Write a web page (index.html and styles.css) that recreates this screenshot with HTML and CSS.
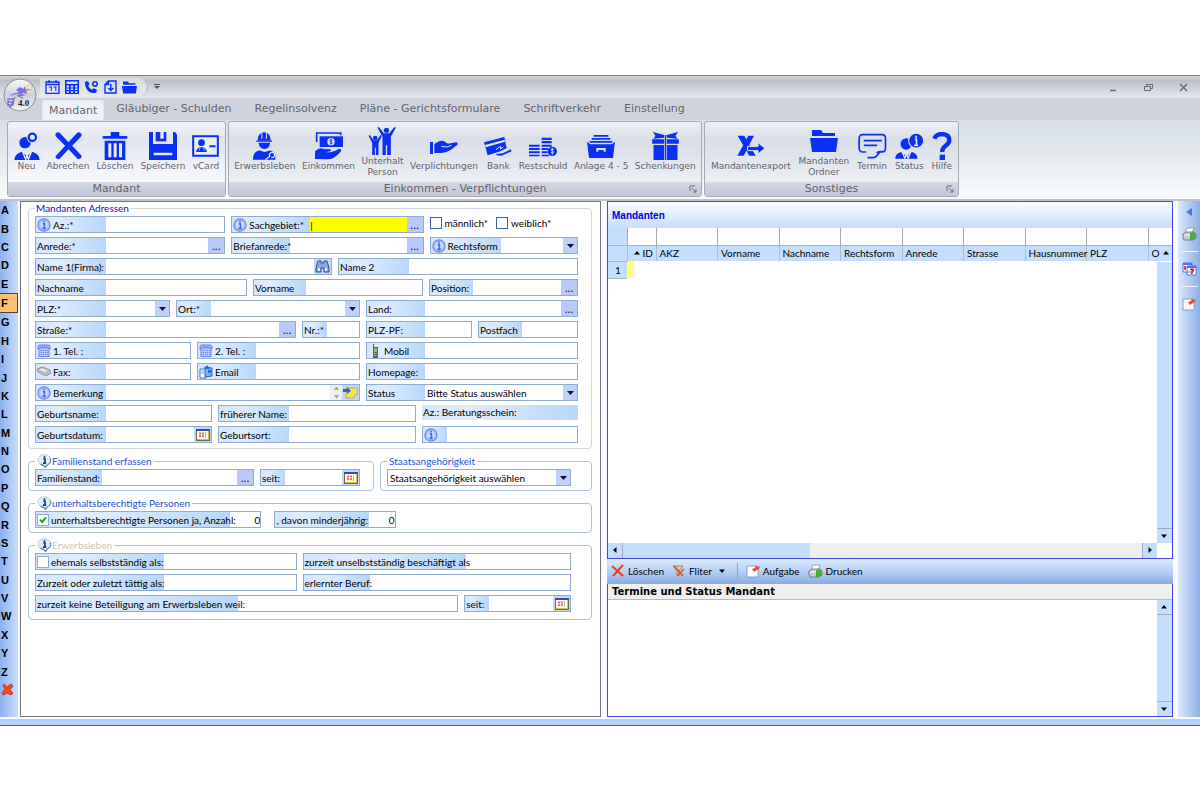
FILE: index.html
```
<!DOCTYPE html>
<html lang="de">
<head>
    <meta charset="UTF-8">
    <meta name="viewport" content="width=device-width, initial-scale=1.0">
    <title>Mandant</title>
    <link rel="stylesheet" href="styles.css">
</head>
<body>

<!-- shared icons -->
<svg class="sprite">
    <symbol id="info" viewBox="0 0 14 14">
        <circle cx="7" cy="7" r="6" fill="#cfdcff" stroke="#6f8cf2" stroke-width="1.4"/>
        <circle cx="7" cy="7" r="4.4" fill="none" stroke="#8fa6f6" stroke-width=".7"/>
        <path d="M7 2.8v1.6M5.6 5.8H7.4V10M5.4 10.4h3.4" stroke="#4668e6" stroke-width="1.6" fill="none"/>
    </symbol>
    <symbol id="bubble" viewBox="0 0 15 14">
        <path d="M7.5 .7a6 5.4 0 0 1 2.6 10.3L8.6 13.4 6.6 11.5A6 5.4 0 0 1 7.5 .7z" fill="#e3eefb" stroke="#a9bfdc" stroke-width=".8"/>
        <path d="M13.3 4.5a6 5.4 0 0 1-3.2 6.5L8.6 13.4 6.6 11.5a6 5.4 0 0 1-3-1.8" fill="none" stroke="#5c86bd" stroke-width="1.3"/>
        <path d="M7.5 2.2v1.7M6.2 5H8v4M6 9.2h3.2" stroke="#143a86" stroke-width="1.7" fill="none"/>
    </symbol>
    <symbol id="calendar" viewBox="0 0 14 12">
        <rect width="14" height="12" fill="#6f6a3a"/>
        <rect width="14" height="2" fill="#2c4fb0"/>
        <rect x="1" y="2" width="11" height="8" fill="#fffbe8"/>
        <path d="M3 3.5h5v4.500H3z" fill="#e06a7a"/>
        <path d="M5.500 3.500V8M3 5.700h5" stroke="#fff" stroke-width=".8"/>
        <path d="M9.500 3v6" stroke="#9fa890" stroke-width=".8"/>
        <path d="M12.500 2v8.500H1" stroke="#e0bf3c" fill="none"/>
    </symbol>
    <symbol id="phone" viewBox="0 0 14 13">
        <path d="M1 5V2.5Q1 1 3 1h8q2 0 2 1.5V5h-3V3H4v2z" fill="#a9bbff" stroke="#5a76ea" stroke-width=".9"/>
        <rect x="2" y="4" width="10" height="8.5" fill="#c9d5ff" stroke="#5a76ea" stroke-width=".9"/>
        <path d="M3.5 6.3h7.5M3.5 8.3h7.5M3.5 10.3h7.5" stroke="#4668e6" stroke-dasharray="1.3 .8"/>
    </symbol>
    <symbol id="folder" viewBox="0 0 28 24">
        <path d="M2 1h9l2 3h12v3H2z"/>
        <path d="M0 9h28l-2 14H2z"/>
    </symbol>
    <symbol id="task" viewBox="0 0 14 14">
        <path d="M1 2h8l3 3v8H1z" fill="#f8fbff" stroke="#7b9ad0" stroke-width=".9"/>
        <path d="M6 5l3-1 1-3 2 2 2-1-1 3-2 1-3 2z" fill="#f0483c"/>
    </symbol>
    <symbol id="printer" viewBox="0 0 15 14">
        <path d="M5 1h7l-2 5H3z" fill="#fff" stroke="#7d8a9c" stroke-width=".7"/>
        <path d="M1 7l3-2h8l2 2v4l-3 2H2l-1-2z" fill="#c3cad3" stroke="#667" stroke-width=".8"/>
        <path d="M8 6l5-1 1 6-3 2H8z" fill="#49ac3c"/>
        <path d="M2 8h6" stroke="#fff"/>
    </symbol>
    <symbol id="up" viewBox="0 0 14 14"><path d="M7 5l3 3.5H4z"/></symbol>
    <symbol id="down" viewBox="0 0 14 14"><path d="M7 9L4 5.5h6z"/></symbol>
    <symbol id="left" viewBox="0 0 14 14"><path d="M5 7l3.5-3v6z"/></symbol>
    <symbol id="right" viewBox="0 0 14 14"><path d="M9 7L5.5 4v6z"/></symbol>
    <symbol id="launcher" viewBox="0 0 8 8">
        <path d="M1 6V1h5M3 3l4 4M7 4v3H4" fill="none" stroke="#6b6d80"/>
    </symbol>
</svg>

<div class="app">
    <header class="titlebar">
        <button class="orb" aria-label="Menü">
            <svg width="34" height="34" viewBox="0 0 34 34">
                <defs>
                    <linearGradient id="orbFill" x1="0" y1="0" x2="0" y2="1">
                        <stop offset="0" stop-color="#fbfbfd"/><stop offset=".5" stop-color="#cfd0d8"/><stop offset="1" stop-color="#f4f4f8"/>
                    </linearGradient>
                </defs>
                <circle cx="17" cy="17" r="16" fill="url(#orbFill)" stroke="#8e9098"/>
                <path d="M17 9l4 2 0-3 2 3 4 0-4 3 1 2-4-1-5 2 1-3-3-2z" fill="#7a70e4"/>
                <path d="M8 17l7-2 5 2-5 1 5 2M5 21h6l-1 6H5zM12 19l-5 11M5 24h5" fill="none" stroke="#7a6ae0" stroke-width="1.3"/>
                <circle cx="26" cy="10" r="3" fill="none" stroke="#f0c490"/>
                <text x="15" y="28" class="orb-text">4.0</text>
            </svg>
        </button>
        <nav class="quick">
            <button aria-label="Kalender"><svg width="15" height="14" viewBox="0 0 15 14"><path d="M1 2h13v11.500H1zM1 4.500h13M4 0v3M11 0v3" fill="none" stroke="#0a2ff5" stroke-width="1.300"/><path d="M4 7h3M6.300 7v4M8.500 7h3M10.800 7v4" stroke="#0a2ff5" fill="none"/></svg></button>
            <button aria-label="Rechner"><svg width="14" height="14" viewBox="0 0 14 14"><path fill="#0a2ff5" fill-rule="evenodd" d="M0 0h14v14H0zM1.500 1.500v2.500h11V1.500zM1.500 5.500v2h2.500v-2zM5.700 5.500v2h2.500v-2zM10 5.500v2h2.500v-2zM1.500 8.500v1.500h2.500V8.500zM5.700 8.500v1.500h2.500V8.500zM10 8.500v1.500h2.500V8.500zM1.500 11.200v1.500h2.500v-1.500zM5.700 11.200v1.500h2.500v-1.500zM10 11.200v1.500h2.500v-1.500z"/></svg></button>
            <button aria-label="Telefon"><svg width="15" height="14" viewBox="0 0 15 14"><path d="M1 2l3-1 1.500 3.500-1.500 1.300q1.300 3 4 4L9.500 8.300l3.500 1.500-1 3Q6 14 3 9.500 .5 6 1 2z" fill="#0a2ff5"/><circle cx="11" cy="4" r="2.200" fill="none" stroke="#0a2ff5" stroke-width="1.600"/></svg></button>
            <button aria-label="Import"><svg width="13" height="14" viewBox="0 0 13 14"><path d="M4.500 1H12v12H1V4.500zM4.500 1v3.500H1M6.800 4v6.500M4.300 8l2.500 2.500L9.300 8" fill="none" stroke="#0a2ff5" stroke-width="1.400"/></svg></button>
            <button aria-label="Ordner"><svg width="15" height="13" fill="#0a2ff5"><use href="#folder"/></svg></button>
        </nav>
        <button class="more" aria-label="Anpassen"><svg width="6" height="6" viewBox="0 0 6 6"><path d="M0 .5h6" stroke="#555"/><path d="M0 2h6L3 5z" fill="#555"/></svg></button>
        <div class="window-buttons">
            <button aria-label="Minimieren"><svg width="9" height="9" viewBox="0 0 9 9"><path d="M1 7.500h6" stroke="#666a74" stroke-width="1.500"/></svg></button>
            <button aria-label="Wiederherstellen"><svg width="9" height="9" viewBox="0 0 9 9"><path d="M.5 3.500h6v4h-6zM2.500 3V1.500h6v4H7" fill="none" stroke="#666a74"/></svg></button>
            <button aria-label="Schließen"><svg width="9" height="9" viewBox="0 0 9 9"><path d="M1 1l7 7M8 1L1 8" stroke="#666a74" stroke-width="1.500"/></svg></button>
        </div>
    </header>

    <nav class="tabs">
        <a href="#" class="active">Mandant</a>
        <a href="#">Gläubiger - Schulden</a>
        <a href="#">Regelinsolvenz</a>
        <a href="#">Pläne - Gerichtsformulare</a>
        <a href="#">Schriftverkehr</a>
        <a href="#">Einstellung</a>
    </nav>

    <div class="ribbon">
        <section class="group group-client">
            <div class="tools">
                <button>
                    <svg width="26" height="28" viewBox="0 0 76 84"><circle cx="32" cy="32" r="17"/><circle cx="54" cy="16" r="17" fill="#eceef6"/><circle cx="54" cy="16" r="11" fill="none" stroke="#0a2ff5" stroke-width="7"/><path d="M0 84q0-18 22-25l16 13 16-13q22 7 22 25z"/><path d="M25 59l9 23 4-13 4 13 9-23" fill="none" stroke="#eceef6" stroke-width="4"/></svg>
                    Neu
                </button>
                <button>
                    <svg width="29" height="28" viewBox="0 0 84 84"><path d="M6 2q6-4 11 2l25 27L67 4q5-6 12 0 5 4 0 10L53 41l29 31q-2 10-12 9L42 52 15 81q-12 1-12-8l29-32L4 13Q0 7 6 2z"/></svg>
                    Abrechen
                </button>
                <button>
                    <svg width="26" height="28" viewBox="0 0 74 84"><path d="M0 12h24V0h26v12h24v8H0z"/><path fill-rule="evenodd" d="M6 26h62v58H6zM17 34v42h9V34zM33 34v42h9V34zM49 34v42h9V34z"/></svg>
                    Löschen
                </button>
                <button>
                    <svg width="28" height="28" viewBox="0 0 84 84"><path fill-rule="evenodd" d="M0 0h12v36h60V0h6l6 8v76H0zM14 62v8h56v-8z"/><path d="M20 0h32v28H20z"/><path d="M34 0h10v20H34z" fill="#eceef6"/></svg>
                    Speichern
                </button>
                <button>
                    <svg width="27" height="28" viewBox="0 0 80 84"><path d="M3 13h74v58H3z" fill="#eceef6" stroke="#0a2ff5" stroke-width="6"/><circle cx="28" cy="32" r="10"/><path d="M12 60q1-14 16-15 15 1 16 15zM52 40h18v6H52z"/><path d="M24 46l-3 10M33 46l4 10" stroke="#eceef6" stroke-width="2"/></svg>
                    vCard
                </button>
            </div>
            <footer>Mandant</footer>
        </section>

        <section class="group group-income">
            <div class="tools">
                <button>
                    <svg width="23" height="28" viewBox="0 0 70 84"><path d="M14 26q0-24 20-26 20 2 20 26z"/><path d="M27 3v17M41 3v17" stroke="#e4e7f1" stroke-width="3"/><path d="M10 25h48v4H10zM17 32h35q-1 18-17 19-17-1-18-19zM0 84q-1-26 22-28 13 9 28 0 14 3 18 12v16z"/><path d="M38 84l13-11a8 8 0 1 1 5 4" fill="none" stroke="#e4e7f1" stroke-width="4"/></svg>
                    Erwerbsleben
                </button>
                <button>
                    <svg width="28" height="28" viewBox="0 0 84 84"><path d="M5 30V3h72v7M5 3v27" fill="none" stroke="#0a2ff5" stroke-width="5"/><path d="M14 13h70v32H14z"/><circle cx="48" cy="29" r="11" fill="#e4e7f1"/><path d="M52 24q-7-3-8 1 0 3 5 4 4 2 2 5-3 2-7-1M48 20v18" fill="none" stroke="#0a2ff5" stroke-width="2.500"/><path d="M0 58q14-13 26-7l20 1q4 3 0 6l-15 3q22 1 40-10 12-1 6 8Q56 83 36 82l-36-1z"/></svg>
                    Einkommen
                </button>
                <button>
                    <svg width="29" height="28" viewBox="0 0 84 84"><circle cx="20" cy="33" r="7"/><path d="M0 26l4-2 11 16h10l11-16 4 2-10 21v37h-8V62h-3v22h-8V47z"/><circle cx="54" cy="10" r="8"/><path d="M27 2l4-2 15 19h16L78 0l4 2-15 27v55H56V55h-4v29H42V29z"/></svg>
                    <span>Unterhalt<br>Person</span>
                </button>
                <button>
                    <svg width="28" height="28" viewBox="0 0 84 84"><path d="M0 30h9v36H0z"/><path d="M13 36l10-6q13-7 22-1l9 6 24-4q8 2 4 7l-19 15q-12 8-28 10l-22 0z"/><path d="M34 43l16 2 14-5" fill="none" stroke="#e4e7f1" stroke-width="3"/></svg>
                    Verplichtungen
                </button>
                <button>
                    <svg width="28" height="28" viewBox="0 0 84 84"><path d="M0 31L61 15l7 34-23 10-34 11z"/><path d="M3 39l59-16 1 6L5 46z" fill="#e4e7f1"/><path d="M36 53l13-10 1 8 8-6" fill="none" stroke="#e4e7f1" stroke-width="3"/><path d="M36 66l20-2 24-12 3 6-31 13-14-1z"/></svg>
                    Bank
                </button>
                <button>
                    <svg width="28" height="28" viewBox="0 0 84 84"><path d="M38 17h30v7H38zM38 27h30v7H38zM0 38h32v6H0zM0 48h32v6H0zM0 58h32v6H0zM0 68h32v5H0zM38 38h30v6H38zM38 48h20v6H38zM38 58h18v6H38zM38 68h22v5H38z"/><circle cx="70" cy="58" r="14"/><path d="M74 52q-7-3-8 1 0 3 5 4 4 2 2 5-3 2-7-1M70 48v20" fill="none" stroke="#e4e7f1" stroke-width="2.500"/></svg>
                    Restschuld
                </button>
                <button>
                    <svg width="28" height="28" viewBox="0 0 84 84"><path d="M20 9h44v5H20zM14 18h56v5H14zM8 27h68v5H8zM0 29l10 8h64l10-8-6 49H6z"/><path d="M28 48h28v11h-6v-5H34v5h-6z" fill="#e4e7f1"/></svg>
                    Anlage 4 - 5
                </button>
                <button>
                    <svg width="27" height="28" viewBox="0 0 80 84"><path d="M2 0l34 9v8L4 20l6-9zM78 0L44 9v8l32 3-6-9zM0 22h36v13H0zM44 22h36v13H44zM4 39h32v45H4zM44 39h32v45H44z"/><path d="M38 9h4v75h-4z"/></svg>
                    Schenkungen
                </button>
            </div>
            <footer>Einkommen - Verpflichtungen<svg class="launcher" width="8" height="8"><use href="#launcher"/></svg></footer>
        </section>

        <section class="group group-misc">
            <div class="tools">
                <button>
                    <svg width="28" height="28" viewBox="0 0 84 84"><path d="M2 11h20l34 60H37zM34 11h17L20 71H1z"/><path d="M32 43h31V32l21 17-21 17V56H32z" stroke="#e4e7f1" stroke-width="3"/></svg>
                    Mandantenexport
                </button>
                <button>
                    <svg width="28" height="28"><use href="#folder"/></svg>
                    <span>Mandanten<br>Ordner</span>
                </button>
                <button>
                    <svg width="29" height="28" viewBox="0 0 86 84"><path d="M14 8h58q10 0 10 12v28q0 12-10 12h-6L55 72q-3 5-12 5H28M24 60H14Q3 60 3 48V20Q3 8 14 8M76 59q-20-2-20 5" fill="none" stroke="#0a2ff5" stroke-width="5"/><path d="M17 26h54M17 40h40" stroke="#0a2ff5" stroke-width="5"/></svg>
                    Termin
                </button>
                <button>
                    <svg width="29" height="28" viewBox="0 0 86 84"><circle cx="33" cy="36" r="17"/><circle cx="63" cy="26" r="24" fill="#e4e7f1"/><circle cx="63" cy="26" r="21"/><path d="M63 11v7M59 22h5v17M57 40h12" stroke="#e4e7f1" stroke-width="5" fill="none"/><path d="M0 80q1-16 18-20l16 12 16-12q16 4 17 20z"/><path d="M21 59l8 20 5-12 5 12 8-20" fill="none" stroke="#e4e7f1" stroke-width="4"/></svg>
                    Status
                </button>
                <button>
                    <svg width="20" height="28" viewBox="0 0 60 84"><path d="M7 20Q12 6 30 6q22 1 22 18 0 10-12 18-10 7-9 18" fill="none" stroke="#0a2ff5" stroke-width="13"/><path d="M23 68h16v16H23z"/></svg>
                    Hilfe
                </button>
            </div>
            <footer>Sonstiges<svg class="launcher" width="8" height="8"><use href="#launcher"/></svg></footer>
        </section>
    </div>

    <main class="workspace">
        <nav class="letters">
            <a href="#">A</a><a href="#">B</a><a href="#">C</a><a href="#">D</a><a href="#">E</a><a href="#" class="active">F</a><a href="#">G</a><a href="#">H</a><a href="#">I</a><a href="#">J</a><a href="#">K</a><a href="#">L</a><a href="#">M</a><a href="#">N</a><a href="#">O</a><a href="#">P</a><a href="#">Q</a><a href="#">R</a><a href="#">S</a><a href="#">T</a><a href="#">U</a><a href="#">V</a><a href="#">W</a><a href="#">X</a><a href="#">Y</a><a href="#">Z</a>
            <a href="#" aria-label="Filter löschen"><svg width="13" height="13" viewBox="0 0 13 13"><path d="M3 1l3 3 4-3 2 2-3 4 3 3-2 2-4-2-4 2-1-2 3-4-2-3z" fill="#f2491f" stroke="#c42c10" stroke-width=".8"/></svg></a>
        </nav>

        <form class="form-panel">
            <fieldset class="address">
                <legend>Mandanten Adressen</legend>
                <div class="row r-az">
                    <div class="field"><label class="w70" for="az"><svg width="14" height="14"><use href="#info"/></svg>Az.:*</label><input id="az"></div>
                    <div class="field"><label class="w78" for="sachgebiet"><svg width="14" height="14"><use href="#info"/></svg>Sachgebiet:*</label><input id="sachgebiet" class="focused" value="|"><button type="button" class="dots">...</button></div>
                    <div class="checks">
                        <label><input type="checkbox">männlich*</label>
                        <label><input type="checkbox">weiblich*</label>
                    </div>
                </div>
                <div class="row r-az">
                    <div class="field"><label class="w70" for="anrede">Anrede:*</label><input id="anrede"><button type="button" class="dots">...</button></div>
                    <div class="field"><label class="w58" for="brief">Briefanrede:*</label><input id="brief"><button type="button" class="dots">...</button></div>
                    <div class="field"><label class="w70" for="rechtsform"><svg width="14" height="14"><use href="#info"/></svg>Rechtsform</label><select id="rechtsform"><option></option></select></div>
                </div>
                <div class="row r-name">
                    <div class="field"><label class="w70" for="name1">Name 1(Firma):</label><input id="name1"><button type="button" class="icon-button" aria-label="Suchen"><svg width="15" height="13" viewBox="0 0 15 13"><path d="M3 1h3v2h3V1h3l2 7v4H9V8H6v4H1V8z" fill="#8aa6da" stroke="#2f4f92"/><path d="M3 8h2v3H3zM10 8h2v3h-2z" fill="#e8f0ff"/></svg></button></div>
                    <div class="field"><label class="w70" for="name2">Name 2</label><input id="name2"></div>
                </div>
                <div class="row r-person">
                    <div class="field"><label class="w70" for="nachname">Nachname</label><input id="nachname"></div>
                    <div class="field"><label class="w52" for="vorname">Vorname</label><input id="vorname"></div>
                    <div class="field"><label class="w42" for="position">Position:</label><input id="position"><button type="button" class="dots">...</button></div>
                </div>
                <div class="row r-place">
                    <div class="field"><label class="w70" for="plz">PLZ:*</label><select id="plz"><option></option></select></div>
                    <div class="field"><label class="w34" for="ort">Ort:*</label><select id="ort"><option></option></select></div>
                    <div class="field"><label class="w58" for="land">Land:</label><input id="land"><button type="button" class="dots">...</button></div>
                </div>
                <div class="row r-street">
                    <div class="field"><label class="w70" for="strasse">Straße:*</label><input id="strasse"><button type="button" class="dots">...</button></div>
                    <div class="field"><label class="w24" for="nr">Nr.:*</label><input id="nr"></div>
                    <div class="field"><label class="w58" for="plzpf">PLZ-PF:</label><input id="plzpf"></div>
                    <div class="field"><label class="w42" for="postfach">Postfach</label><input id="postfach"></div>
                </div>
                <div class="row r-phone">
                    <div class="field"><label class="w70" for="tel1"><svg width="14" height="13"><use href="#phone"/></svg>1. Tel. :</label><input id="tel1"></div>
                    <div class="field"><label class="w58" for="tel2"><svg width="14" height="13"><use href="#phone"/></svg>2. Tel. :</label><input id="tel2"></div>
                    <div class="field"><label class="w58" for="mobil"><svg width="14" height="14" viewBox="0 0 14 14"><path d="M5 0h1v3h4v11H5z" fill="#59635a"/><path d="M6 4h3v4H6z" fill="#7fc46a"/><path d="M6 9.500h3M6 11.500h3" stroke="#c8ccc8" stroke-dasharray="1 .5"/></svg>Mobil</label><input id="mobil"></div>
                </div>
                <div class="row r-phone">
                    <div class="field"><label class="w70" for="fax"><svg width="14" height="13" viewBox="0 0 14 13"><path d="M0 4l5-2 8 3 1 3-5 3-8-4z" fill="#b9bdc4" stroke="#7d828a" stroke-width=".8"/><path d="M2 4.500l3-1 6 2-3 1.500z" fill="#e9ebee"/></svg>Fax:</label><input id="fax"></div>
                    <div class="field"><label class="w58" for="email"><svg width="14" height="14" viewBox="0 0 14 14"><path d="M1 4h6v9H1z" fill="#fff" stroke="#4777c4"/><path d="M6 2l7 1v8l-7 1z" fill="#7cb4f0" stroke="#2c62b8"/><path d="M8 0l3 4H6zM9 5h3v3H9z" fill="#2468c8"/><path d="M2 6h3M2 8h3" stroke="#7c9cd0"/></svg>Email</label><input id="email"></div>
                    <div class="field"><label class="w58" for="homepage">Homepage:</label><input id="homepage"></div>
                </div>
                <div class="row r-note">
                    <div class="field"><label class="w70" for="bemerkung"><svg width="14" height="14"><use href="#info"/></svg>Bemerkung</label><input id="bemerkung"><span class="spin"><svg width="9" height="7" viewBox="2 4 10 6"><use href="#up" width="14" height="14"/></svg><svg width="9" height="7" viewBox="2 4 10 6"><use href="#down" width="14" height="14"/></svg></span><button type="button" class="icon-button" aria-label="Notiz"><svg width="15" height="13" viewBox="0 0 15 13"><path d="M3 2h12l-1 7-3 3H3z" fill="#f6e25a" stroke="#a89638" stroke-width=".7"/><path d="M14 9h-3v3" fill="#fff6ae" stroke="#a89638" stroke-width=".7"/><path d="M0 3h4V1l4 4-4 3V6H0z" fill="#2c64c4"/></svg></button></div>
                    <div class="field"><label class="w58" for="status">Status</label><select id="status"><option>Bitte Status auswählen</option></select></div>
                </div>
                <div class="row r-birth">
                    <div class="field"><label class="w70" for="gebname">Geburtsname:</label><input id="gebname"></div>
                    <div class="field"><label class="w70" for="frueher">früherer Name:</label><input id="frueher"></div>
                    <label class="caption" for="beratung">Az.: Beratungsschein:</label>
                </div>
                <div class="row r-birth">
                    <div class="field"><label class="w70" for="gebdatum">Geburtsdatum:</label><input id="gebdatum"><button type="button" class="icon-button" aria-label="Datum"><svg width="14" height="12"><use href="#calendar"/></svg></button></div>
                    <div class="field"><label class="w70" for="gebort">Geburtsort:</label><input id="gebort"></div>
                    <div class="field"><label class="w24" for="beratung"><svg width="14" height="14"><use href="#info"/></svg></label><input id="beratung"></div>
                </div>
            </fieldset>

            <div class="pair">
                <fieldset>
                    <legend><svg width="15" height="14"><use href="#bubble"/></svg>Familienstand erfassen</legend>
                    <div class="row r-family">
                        <div class="field"><label class="w66" for="familie">Familienstand:</label><input id="familie"><button type="button" class="dots">...</button></div>
                        <div class="field"><label class="w24" for="seit1">seit:</label><input id="seit1"><button type="button" class="icon-button" aria-label="Datum"><svg width="14" height="12"><use href="#calendar"/></svg></button></div>
                    </div>
                </fieldset>
                <fieldset>
                    <legend>Staatsangehörigkeit</legend>
                    <div class="row r-state">
                        <div class="field"><select aria-label="Staatsangehörigkeit"><option>Staatsangehörigkeit auswählen</option></select></div>
                    </div>
                </fieldset>
            </div>

            <fieldset>
                <legend><svg width="15" height="14"><use href="#bubble"/></svg>unterhaltsberechtigte Personen</legend>
                <div class="row r-support">
                    <div class="field"><label class="w194"><input type="checkbox" checked>unterhaltsberechtigte Personen ja, Anzahl:</label><input class="number" aria-label="Anzahl" value="0"></div>
                    <div class="field"><label class="w94" for="minder">, davon minderjährig:</label><input id="minder" class="number" value="0"></div>
                </div>
            </fieldset>

            <fieldset class="work">
                <legend><svg width="15" height="14"><use href="#bubble"/></svg>Erwerbsleben</legend>
                <div class="row r-work">
                    <div class="field"><label class="w128"><input type="checkbox">ehemals selbstständig als:</label><input aria-label="ehemals selbstständig als"></div>
                    <div class="field"><label class="w162" for="unselbst">zurzeit unselbstständig beschäftigt als</label><input id="unselbst"></div>
                </div>
                <div class="row r-work">
                    <div class="field"><label class="w128" for="zurzeit">Zurzeit oder zuletzt tättig als:</label><input id="zurzeit"></div>
                    <div class="field"><label class="w66" for="beruf">erlernter Beruf:</label><input id="beruf"></div>
                </div>
                <div class="row r-reason">
                    <div class="field"><label class="w202" for="grund">zurzeit keine Beteiligung am Erwerbsleben weil:</label><input id="grund"></div>
                    <div class="field"><label class="w24" for="seit2">seit:</label><input id="seit2"><button type="button" class="icon-button" aria-label="Datum"><svg width="14" height="12"><use href="#calendar"/></svg></button></div>
                </div>
            </fieldset>
        </form>

        <div class="side">
            <section class="list">
                <h2>Mandanten</h2>
                <div class="list-body">
                    <table>
                        <colgroup><col class="c-num"><col class="c-id"><col><col><col><col><col><col><col><col><col class="c-last"></colgroup>
                        <thead>
                            <tr class="filter"><td></td><td></td><td></td><td></td><td></td><td></td><td></td><td></td><td></td><td></td><td></td></tr>
                            <tr><th></th><th class="id"><svg width="8" height="8" viewBox="3 3 8 8"><use href="#up" width="14" height="14"/></svg>ID</th><th>AKZ</th><th>Vorname</th><th>Nachname</th><th>Rechtsform</th><th>Anrede</th><th>Strasse</th><th>Hausnummer</th><th>PLZ</th><th>O<svg width="8" height="8" viewBox="3 3 8 8"><use href="#up" width="14" height="14"/></svg></th></tr>
                        </thead>
                        <tbody>
                            <tr><th>1</th><td class="current"></td><td colspan="9"></td></tr>
                        </tbody>
                    </table>
                    <div class="vscroll">
                        <button aria-label="Nach unten"><svg width="14" height="14"><use href="#down"/></svg></button>
                    </div>
                </div>
                <div class="hscroll">
                    <button aria-label="Nach links"><svg width="14" height="14"><use href="#left"/></svg></button>
                    <div class="thumb"></div>
                    <div class="track"></div>
                    <button aria-label="Nach rechts"><svg width="14" height="14"><use href="#right"/></svg></button>
                </div>
            </section>

            <div class="toolbar">
                <button><svg width="14" height="14" viewBox="0 0 14 14"><path d="M1 2l11 10M12 1L2 12" stroke="#e8401c" stroke-width="2"/></svg>Löschen</button>
                <button><svg width="14" height="14" viewBox="0 0 14 14"><path d="M1 2h10L7 7v5L5 11V7z" fill="#d9c7b4" stroke="#94715a" stroke-width=".8"/><path d="M2 2l9 10M12 5l-7 7" stroke="#e8501c" stroke-width="1.600"/></svg>Fliter<svg width="14" height="14"><use href="#down"/></svg></button>
                <i></i>
                <button><svg width="14" height="14"><use href="#task"/></svg>Aufgabe</button>
                <button><svg width="15" height="14"><use href="#printer"/></svg>Drucken</button>
            </div>

            <section class="dates">
                <h3>Termine und Status Mandant</h3>
                <div class="dates-body">
                    <div class="vscroll">
                        <button aria-label="Nach oben"><svg width="14" height="14"><use href="#up"/></svg></button>
                        <button aria-label="Nach unten"><svg width="14" height="14"><use href="#down"/></svg></button>
                    </div>
                </div>
            </section>
        </div>

        <aside class="dock">
            <button aria-label="Einblenden"><svg width="8" height="10" viewBox="0 0 8 10"><path d="M7 1v8L1 5z" fill="#3d7be0"/></svg></button>
            <button aria-label="Drucken"><svg width="15" height="14"><use href="#printer"/></svg></button>
            <i></i>
            <button aria-label="Kalender"><svg width="15" height="14" viewBox="0 0 15 14"><path d="M1 1h9v9H1zM5 4h9v9H5z" fill="#fff" stroke="#4a78d8"/><path d="M1 1h9v2H1zM5 4h9v2H5z" fill="#4a78d8"/><path d="M3 4v4M8 7.500h3.500L9.500 12" stroke="#e01818" stroke-width="1.600" fill="none"/></svg></button>
            <i></i>
            <button aria-label="Aufgabe"><svg width="14" height="14"><use href="#task"/></svg></button>
        </aside>
    </main>
    <div class="statusbar"></div>
</div>

</body>
</html>
```
FILE: styles.css
```
* {
    box-sizing: border-box;
}
body {
    margin: 0;
    min-height: 100vh;
    padding: 75px 0 74px;
    display: flex;
    flex-direction: column;
    background: white;
    font-family: Lato, "Liberation Sans", Arial, sans-serif;
    font-size: 10px;
    color: #000;
}
button, input, select {
    font: inherit;
    color: inherit;
    margin: 0;
    padding: 0;
    border: none;
    border-radius: 0;
    background: none;
}
svg {
    display: block;
    flex: none;
}
a {
    color: inherit;
    text-decoration: none;
}
.sprite {
    position: absolute;
    width: 0;
    height: 0;
}
.app {
    flex: 1;
    display: flex;
    flex-direction: column;
    border-top: 1px solid #77787e;
    border-bottom: 1px solid #4d5f78;
    background: #f4f7fc;
}

/* title bar */
.titlebar {
    position: relative;
    display: flex;
    align-items: center;
    height: 22px;
    padding-left: 40px;
    background: linear-gradient(#d3d6dc, #b9bfc8 20%, #d0d6dd 60%, #e3e8ed);
}
.orb {
    position: absolute;
    left: 3px;
    top: 2px;
    z-index: 2;
}
.orb-text {
    font: bold 9px "Liberation Serif", serif;
    fill: #222;
}
.quick {
    display: flex;
    align-items: center;
    gap: 5px;
    height: 19px;
    padding: 0 10px 0 5px;
    border-right: 1px solid #b4bac4;
    border-radius: 0 10px 10px 0;
    background: linear-gradient(#d5d9e0, #e6eaef);
}
.more {
    margin-left: 6px;
}
.window-buttons {
    display: flex;
    gap: 26px;
    margin-left: auto;
    padding-right: 12px;
}

/* tabs */
.tabs {
    display: flex;
    height: 22px;
    padding-left: 42px;
    background: #d0d3dd;
    font: 11px/22px "DejaVu Sans", Verdana, sans-serif;
    color: #62646e;
}
.tabs a {
    padding: 0 9px;
    margin-right: 5px;
}
.tabs .active {
    padding: 0 6px;
    margin: 2px 3px 0 0;
    line-height: 19px;
    border: 1px solid #e2e6ee;
    border-bottom: none;
    border-radius: 3px 3px 0 0;
    background: #eef1f7;
}

/* ribbon */
.ribbon {
    display: flex;
    gap: 2px;
    padding: 1px 7px 2px;
    border-bottom: 2px solid #bfc2c6;
    background: linear-gradient(#d8e0e8, #dfe5ec 30%, #f9fcfc);
    font-family: "DejaVu Sans", Verdana, sans-serif;
    color: #62646e;
}
.group {
    display: flex;
    flex-direction: column;
    border: 1px solid #a7aab3;
    border-radius: 3px;
    background: linear-gradient(#eef0f5, #d9dde7 24%, #dfe3eb 45%, #f3f5f8);
}
.group-client {
    width: 219px;
    background: linear-gradient(#f3f4f9, #e1e3f1 24%, #eceef6 50%, #fff);
}
.group-income {
    width: 474px;
}
.group-misc {
    width: 255px;
}
.tools {
    display: flex;
    align-items: center;
    justify-content: space-around;
    height: 60px;
    padding: 0 2px;
}
.tools button {
    display: flex;
    flex-direction: column;
    align-items: center;
    gap: 1px;
    font-size: 9px;
    line-height: 11px;
    white-space: nowrap;
}
.tools svg {
    fill: #0a2ff5;
}
.group footer {
    position: relative;
    height: 14px;
    font-size: 11px;
    line-height: 14px;
    text-align: center;
    border-radius: 0 0 2px 2px;
    background: linear-gradient(#d6d9e4, #c2c5d6);
}
.launcher {
    position: absolute;
    right: 4px;
    top: 3px;
}

/* workspace */
.workspace {
    flex: 1;
    display: grid;
    grid-template-columns: 18px minmax(0, 583fr) minmax(0, 572fr) 27px;
    background: #f9f9ff;
    padding-bottom: 2px;
}
.letters {
    display: flex;
    flex-direction: column;
    padding-bottom: 18px;
    background: linear-gradient(to right, #8bb1ee, #cadefa);
    font: bold 11px "Liberation Sans", Arial, sans-serif;
}
.letters a {
    flex: 1;
    display: flex;
    align-items: center;
    padding-left: 1px;
}
.letters .active {
    border: 1px solid #4b4640;
    border-left: none;
    background: #fdc071;
}
.form-panel {
    margin-left: 2px;
    padding: 0 8px 0 7px;
    border: 1px solid #74757f;
    background: white;
}
fieldset {
    min-width: 0;
    margin: 0 0 6px;
    padding: 2px 6px 4px;
    border: 1px solid #a8c0da;
    border-radius: 4px;
}
legend {
    display: flex;
    align-items: center;
    height: 12px;
    padding: 0 2px;
    line-height: 12px;
    color: #1c50dc;
}
.address {
    padding: 2px 13px 5px 6px;
    border-color: #d3d6dc;
}
.address legend {
    padding: 0 1px;
    color: #1010b4;
}
.work {
    padding-bottom: 7px;
}
.work legend {
    color: #c6c3b4;
}
.pair {
    display: grid;
    grid-template-columns: 346fr 212fr;
    gap: 6px;
}
.row {
    display: grid;
    gap: 6px;
    height: 17px;
    margin-bottom: 4px;
}
.row:last-child {
    margin-bottom: 0;
}
.r-az { grid-template-columns: 191fr 193fr 149fr; }
.r-name { grid-template-columns: 297fr 240fr; }
.r-person { grid-template-columns: 212fr 170fr 149fr; }
.r-place { grid-template-columns: 135fr 184fr 212fr; }
.r-street { grid-template-columns: 261fr 58fr 106fr 100fr; }
.r-phone { grid-template-columns: 156fr 163fr 212fr; }
.r-note { grid-template-columns: 325fr 212fr; }
.r-birth { grid-template-columns: 177fr 198fr 156fr; }
.r-family { grid-template-columns: 219fr 100fr; padding-right: 7px; }
.r-state { padding-right: 14px; }
.r-support { grid-template-columns: 226fr 121fr 176fr; gap: 13px; }
.r-work { grid-template-columns: 262fr 269fr; padding-right: 14px; }
.r-reason { grid-template-columns: 424fr 107fr; padding-right: 14px; }

.field {
    display: flex;
    min-width: 0;
    border: 1px solid #8facd0;
    background: white;
}
.field label {
    flex: none;
    display: flex;
    align-items: center;
    gap: 2px;
    padding-left: 1px;
    white-space: nowrap;
}
.field label, .caption {
    background: linear-gradient(to right, #d3e5fd, #dfecfd 30%, #b7d7fc);
}
.field > input, .field > select {
    flex: 1;
    width: 0;
    min-width: 0;
    outline: none;
}
.w24 { width: 24px; }
.w34 { width: 34px; }
.w42 { width: 43px; }
.w52 { width: 52px; }
.w58 { width: 58px; }
.w66 { width: 66px; }
.w70 { width: 70px; }
.w78 { width: 78px; }
.w94 { width: 94px; }
.w128 { width: 128px; }
.w162 { width: 162px; }
.w194 { width: 194px; }
.w202 { width: 202px; }
.caption {
    align-self: start;
    height: 15px;
    line-height: 15px;
    padding-left: 1px;
}
.field select {
    appearance: none;
    padding: 0 16px 0 2px;
    background: url("data:image/svg+xml,%3Csvg xmlns='http://www.w3.org/2000/svg' width='14' height='15'%3E%3Cpath fill='%23bfd0fc' d='M0 0h14v15H0z'/%3E%3Cpath fill='%23101040' d='M4 6h7L7.5 10z'/%3E%3C/svg%3E") right center no-repeat;
}
.focused {
    background: #ff0;
}
.number {
    text-align: right;
}
.dots {
    width: 16px;
    background: #b9c9fc;
    color: #226;
    font-size: 12px;
    line-height: 15px;
}
.icon-button {
    display: flex;
    align-items: center;
    justify-content: center;
    width: 17px;
    background: #c5d6fb;
}
.spin {
    display: flex;
    flex-direction: column;
    justify-content: space-between;
    width: 12px;
    align-items: center;
    background: #eee;
    fill: #999;
}
.checks {
    display: flex;
    gap: 8px;
}
.checks label {
    display: flex;
    align-items: center;
    gap: 3px;
    height: 14px;
}
input[type="checkbox"] {
    appearance: none;
    flex: none;
    width: 12px;
    height: 12px;
    border: 1px solid #3f6796;
    background: white;
}
.field input[type="checkbox"] {
    border-color: #8facd0;
}
input[type="checkbox"]:checked {
    background: white url("data:image/svg+xml,%3Csvg xmlns='http://www.w3.org/2000/svg' width='10' height='10'%3E%3Cpath fill='none' stroke='%2321a121' stroke-width='2' d='M2 4.500l2 2.500 4-4.500'/%3E%3C/svg%3E") center no-repeat;
}

/* right side */
.side {
    display: flex;
    flex-direction: column;
    margin-left: 6px;
}
.list {
    flex: 358;
    display: flex;
    flex-direction: column;
    border: 1px solid #4646e6;
    background: white;
}
h2 {
    margin: 0;
    height: 26px;
    padding-left: 4px;
    font: bold 10px/27px "Liberation Sans", Arial, sans-serif;
    color: #0000e0;
    background: linear-gradient(#fbfdff, #c6dcfa);
}
.list-body {
    flex: 1;
    display: grid;
}
.list-body > * {
    grid-area: 1 / 1;
}
table {
    align-self: start;
    width: 100%;
    table-layout: fixed;
    border-collapse: collapse;
}
td, th {
    padding: 0;
}
th {
    height: 16px;
    padding-left: 3px;
    font-weight: normal;
    text-align: left;
    white-space: nowrap;
    background: #c3dffd;
    border-left: 1px solid #aebfd2;
}
th svg {
    display: inline-block;
    margin: 0 2px;
}
th:first-child {
    border-left: none;
}
.c-num { width: 19px; }
.c-id { width: 29px; }
.c-last { width: 24px; }
.filter td {
    height: 17px;
    border-left: 1px solid #a9a9a9;
    border-bottom: 1px solid #a9b4c0;
}
.filter td:first-child {
    border-left: none;
    background: #c3dffd;
}
tbody th {
    height: 17px;
    padding-left: 7px;
    border-top: 1px solid #a9b4c0;
    border-bottom: 1px solid #a9b4c0;
}
.current {
    background: linear-gradient(#ffff80, #ffff80) no-repeat;
    background-size: 7px 100%;
}
.vscroll {
    display: flex;
    flex-direction: column;
    justify-content: space-between;
    width: 15px;
    background: #c3dffd;
}
.vscroll button {
    border-top: 1px solid #a2aebc;
}
.list .vscroll {
    justify-self: end;
    justify-content: flex-end;
    margin-top: 34px;
}
.hscroll {
    display: flex;
    height: 15px;
    padding-right: 15px;
}
.hscroll button {
    background: #c3dffd;
    border-right: 1px solid #a2aebc;
}
.hscroll button:last-child {
    border-right: none;
    border-left: 1px solid #a2aebc;
}
.thumb {
    flex: 187;
    background: #c3dffd;
}
.track {
    flex: 333;
    background: #efefef;
}
.toolbar {
    display: flex;
    align-items: center;
    gap: 8px;
    height: 25px;
    padding-left: 4px;
    background: linear-gradient(#dceafd, #b5d0f6 50%, #87abe3);
}
.toolbar button {
    display: flex;
    align-items: center;
    gap: 3px;
}
.toolbar i {
    width: 1px;
    height: 16px;
    background: #88a6d6;
}
.dates {
    flex: 133;
    display: flex;
    flex-direction: column;
    border: 1px solid #4646e6;
    border-top: none;
    background: white;
}
h3 {
    margin: 0;
    height: 16px;
    padding-left: 4px;
    font: bold 10px/15px "DejaVu Sans", Verdana, sans-serif;
    background: #efefef;
    border-bottom: 1px solid #b9b9b9;
}
.dates-body {
    flex: 1;
    display: flex;
    justify-content: flex-end;
}
.dates .vscroll button:first-child {
    border-top: none;
    border-bottom: 1px solid #a2aebc;
}
.dock {
    display: flex;
    flex-direction: column;
    align-items: center;
    gap: 10px;
    margin-left: 5px;
    padding-top: 6px;
    background: linear-gradient(to right, #dce9fc, #8caee6);
}
.dock i {
    width: 17px;
    height: 1px;
    background: #f0f6ff;
}
.statusbar {
    height: 6px;
    background: #b3cffa;
}
```
